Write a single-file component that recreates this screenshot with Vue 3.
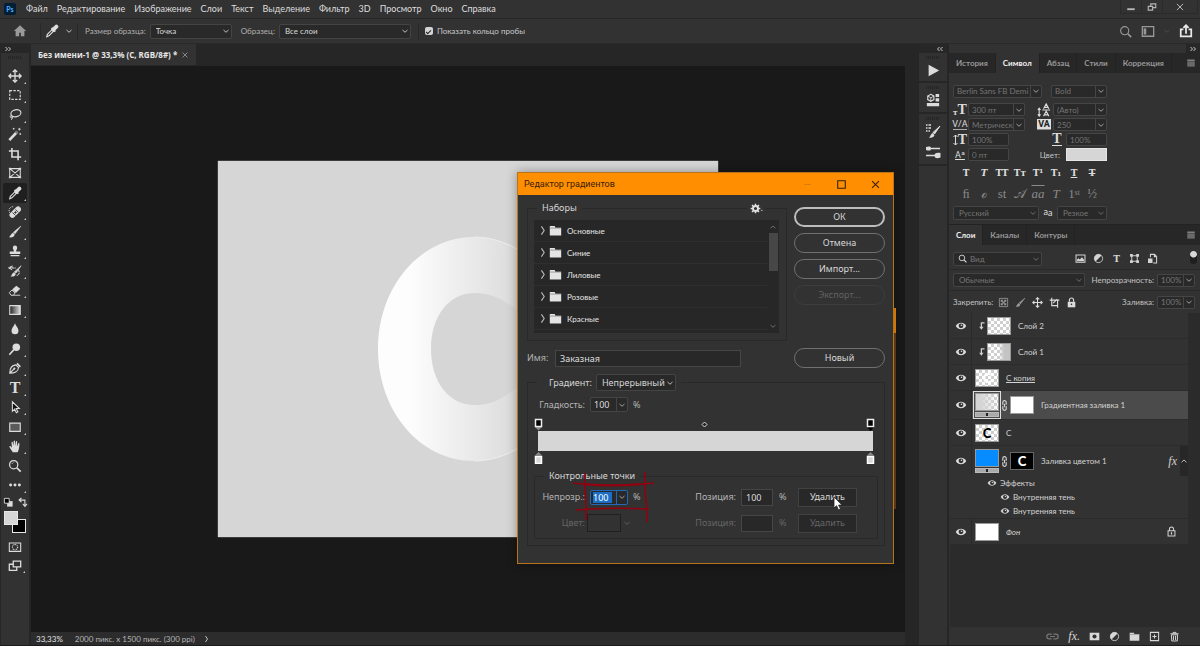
<script setup>
import { ref } from 'vue'

const menus = ['Файл', 'Редактирование', 'Изображение', 'Слои', 'Текст', 'Выделение', 'Фильтр', '3D', 'Просмотр', 'Окно', 'Справка']

const icons = {
  chevron: '<path d="M3 6l5 4.500L13 6" fill="none" stroke="currentColor" stroke-width="1.700"/>',
  chevronUp: '<path d="M3 10.500L8 6l5 4.500" fill="none" stroke="currentColor" stroke-width="1.700"/>',
  chevronRight: '<path d="M5 2l4 6-4 6" fill="none" stroke="currentColor" stroke-width="1.6"/>',
  expand: '<path d="M3 4l4 4-4 4M9 4l4 4-4 4" fill="none" stroke="currentColor" stroke-width="2"/>',
  collapse: '<path d="M7 4L3 8l4 4M13 4L9 8l4 4" fill="none" stroke="currentColor" stroke-width="2"/>',
  close: '<path d="M3 3l10 10M13 3L3 13" fill="none" stroke="currentColor" stroke-width="1.6"/>',
  minimize: '<path d="M2 10h12v3H2z" fill="currentColor"/>',
  restore: '<path d="M2 7h7v6H2zM6 7V3h8v6H9" fill="none" stroke="currentColor" stroke-width="1.8"/>',
  maximize: '<path d="M2.500 2.500h11v11h-11z" fill="none" stroke="currentColor" stroke-width="1.6"/>',
  dash: '<path d="M3 8h10" stroke="currentColor" stroke-width="1"/>',
  home: '<path d="M8 1.5L1 8h2v6h4V10h2v4h4V8h2z" fill="currentColor"/>',
  search: '<circle cx="7" cy="7" r="5" fill="none" stroke="currentColor" stroke-width="1.4"/><path d="M11 11l4 4" stroke="currentColor" stroke-width="2"/>',
  workspace: '<path d="M1.500 3h13v11h-13z" fill="none" stroke="currentColor" stroke-width="1.5"/><path d="M3 5h3v7H3z" fill="currentColor"/>',
  share: '<path d="M5 6H2v8h12V6h-3M8 11V2M5 4.500L8 1.500l3 3" fill="none" stroke="currentColor" stroke-width="2"/>',
  move: '<path d="M8 1v14M1 8h14M5.500 3.500L8 1l2.500 2.500M5.500 12.500L8 15l2.500-2.500M3.500 5.500L1 8l2.500 2.500M12.500 5.500L15 8l-2.500 2.500" fill="none" stroke="currentColor" stroke-width="1.5"/>',
  marquee: '<path d="M2 3h12v10H2z" fill="none" stroke="currentColor" stroke-width="1.3" stroke-dasharray="2.700 1.500"/>',
  lasso: '<ellipse cx="9" cy="6" rx="5.800" ry="4" transform="rotate(-12 9 6)" fill="none" stroke="currentColor" stroke-width="1.300"/><path d="M4 8.500c-2 0-2 3 0 2.500s0-2.500 0-2.500c2 2 1 4-0.500 5" fill="none" stroke="currentColor" stroke-width="1.100"/>',
  wand: '<path d="M1.500 15L10 6" stroke="currentColor" stroke-width="3"/><path d="M9 7l2-2" stroke="#777" stroke-width="3"/><path d="M13 1v3M11.500 2.500h3M6.500 1v2M5.500 2h2M14 7v2M13 8h2" stroke="currentColor" stroke-width="1"/>',
  crop: '<path d="M4.500 1v10.500H15M1 4.500h10.500V15" fill="none" stroke="currentColor" stroke-width="1.800"/>',
  frame: '<path d="M2 3h12v10H2zM2 3l12 10M14 3L2 13" fill="none" stroke="currentColor" stroke-width="1.200"/><path d="M1 2h2v2H1zM13 2h2v2h-2zM1 12h2v2H1zM13 12h2v2h-2z" fill="currentColor"/>',
  eyedropper: '<path d="M2 14.500l.7-2.700L8 6.500 9.700 8.200 4.500 13.500z" fill="none" stroke="currentColor" stroke-width="1.300"/><path d="M7.500 4.500l4.200 4.200" stroke="currentColor" stroke-width="2.200"/><path d="M9.500 6.500l3.500-3.500" stroke="currentColor" stroke-width="4.400" stroke-linecap="round"/>',
  heal: '<path d="M5 11.500L11.500 5" stroke="currentColor" stroke-width="6.500" stroke-linecap="round"/><path d="M5 8.500L8.500 12M8.500 5L12 8.500" stroke="#323232" stroke-width="1"/><path d="M7 8.500h3M8.500 7v3" stroke="#323232" stroke-width="1"/><path d="M2 9C0 5 2 1.500 7 2" fill="none" stroke="currentColor" stroke-width="1" stroke-dasharray="1.200 1"/>',
  brush: '<path d="M14.500 1.500L8 10 6.300 8.300z" fill="currentColor" stroke="currentColor" stroke-width=".8"/><path d="M5.700 8.800l2 2c-.5 3-3.200 3.700-6.700 3.200C3 13 3 9.800 5.700 8.800z" fill="currentColor"/>',
  stamp: '<path d="M5.500 4.500a2.500 2.800 0 1 1 5 0c0 1.500-1.200 2-1.200 4H14v3H2v-3h4.700c0-2-1.200-2.500-1.200-4zM3 12.600h10V14H3z" fill="currentColor"/>',
  history: '<path d="M15 2L9 10.500 7.300 9z" fill="currentColor" stroke="currentColor" stroke-width=".8"/><path d="M6.800 9.500l2 2c-.5 2.700-3 3.200-6 2.700 2-.8 1.500-3.700 4-4.700z" fill="currentColor"/><path d="M1 4.500h3.500V2.500L1 4.500l3.500 2zM5 4.500h4M12 7c2 3 0 6-2 6" fill="none" stroke="currentColor" stroke-width="1.200" stroke-dasharray="2.500 .6"/>',
  eraser: '<path d="M1.500 11l3-3L8 11.500 6 14H3.500z" fill="none" stroke="currentColor" stroke-width="1.100"/><path d="M4.800 7.500L9.500 3 14 6.500l-5 5z" fill="currentColor"/><path d="M6 14h8" stroke="currentColor"/>',
  gradient: '<defs><linearGradient id="toolGrad"><stop stop-color="#222"/><stop offset="1" stop-color="#ddd"/></linearGradient></defs><path d="M2 3h12v10H2z" fill="url(#toolGrad)" stroke="currentColor" stroke-width="1.200"/>',
  drop: '<path d="M8 1.500c1 3 4 5.500 4 8.500a4 4 0 0 1-8 0c0-3 3-5.500 4-8.500z" fill="currentColor"/>',
  dodge: '<circle cx="9.500" cy="6" r="4.300" fill="currentColor"/><path d="M6.500 9l-5 5.500" stroke="currentColor" stroke-width="1.800"/>',
  pen: '<path d="M2 14c0-5 2-9 7-9.500l3 3C12 12 7 14 2 14zM2 14l5-5" fill="none" stroke="currentColor" stroke-width="1.300"/><circle cx="7.300" cy="8.700" r="1.200" fill="currentColor"/><path d="M9.500 3.500l4 4 1.200-1.500L11 2z" fill="currentColor"/>',
  arrow: '<path d="M5 2v11l2.600-2.500 2 4 1.700-.9-2-3.800H13z" fill="#111" stroke="currentColor" stroke-width="1.200"/>',
  rect: '<path d="M2 3.500h12v9.500H2z" fill="#5a5a5a" stroke="currentColor" stroke-width="1.300"/>',
  hand: '<path d="M5.500 15C4 13 2 10 1.500 8.500c.8-.8 1.500-.3 3 1.500L4 4c.2-1 1.300-1 1.500 0L6.200 8 6.500 2.500c.2-1 1.400-1 1.500 0L8.300 8l.7-5c.3-1 1.400-.8 1.500.2L10.200 8.500 11.700 5c.5-.8 1.500-.4 1.400.5C12.800 8 13 12 11 15z" fill="currentColor"/>',
  zoom: '<circle cx="6.500" cy="6.500" r="4.700" fill="none" stroke="currentColor" stroke-width="1.400"/><path d="M10 10l4.500 4.500" stroke="currentColor" stroke-width="2"/><path d="M4.500 5.500l1.500-1.500" stroke="currentColor"/>',
  dots: '<circle cx="3" cy="8" r="1.700" fill="currentColor"/><circle cx="8" cy="8" r="1.700" fill="currentColor"/><circle cx="13" cy="8" r="1.700" fill="currentColor"/>',
  resetColors: '<path d="M6 6h8v8H6z" fill="currentColor"/><path d="M2 2h7v7H2z" fill="#000" stroke="currentColor" stroke-width="1.300"/>',
  swapColors: '<path d="M4 4.500h7.500V12M6.500 1.500l-3.500 3 3.500 3M8.500 10l3 3.500 3-3.500" fill="none" stroke="currentColor" stroke-width="1.600"/>',
  mask: '<path d="M1.500 3.500h13v9.500h-13z" fill="none" stroke="currentColor" stroke-width="1.200"/><circle cx="8" cy="8.200" r="3" fill="none" stroke="currentColor" stroke-width="1.200" stroke-dasharray="1.200 .8"/>',
  screen: '<path d="M6 2.500h8.500V9H6zM6 6H1.500v7h8.500V9" fill="none" stroke="currentColor" stroke-width="1.500"/>',
  play: '<path d="M2 1l13 7-13 7z" fill="currentColor"/>',
  props: '<path d="M5.500 1.500l3.500 2v4l-3.500 2-3.500-2v-4z" fill="none" stroke="currentColor" stroke-width="1.300"/><path d="M2 3.500l3.500 2 3.500-2M5.500 5.500v4" fill="none" stroke="currentColor" stroke-width="1"/><path d="M11 1h4v3.700h-4zM11 6h4v3.700h-4zM1 11.500h14V15H1z" fill="currentColor"/>',
  brushes: '<path d="M1 2h1.500M3.500 2H6M1 5h1.500M3.500 5H6M1 8h1.500M3.500 8H5" stroke="currentColor" stroke-width="1.300"/><path d="M15 3L9.500 11 8 9.500z" fill="currentColor" stroke="currentColor"/><path d="M7.500 10l2 2c-.6 2.500-3 3-5.500 2.500 1.700-.8 1.500-3.700 3.500-4.500z" fill="currentColor"/>',
  brushSettings: '<path d="M4 4.500h11M1 11.500h11" stroke="currentColor" stroke-width="1.500"/><path d="M1 3c3-1 5-1 5 1.500S4 7 1 6zM15.500 9c-4-.6-6 0-6 2.500s2 3.500 6 2z" fill="currentColor"/>',
  menu: '<path d="M2 3.500h12M2 6.500h12M2 9.500h12M2 12.500h12" stroke="currentColor" stroke-width="2.200"/>',
  image: '<path d="M1.500 3h13v10.500h-13z" fill="none" stroke="currentColor" stroke-width="1.500"/><path d="M3 12V9.500l2-2 2 2L10 6l3 3.500V12z" fill="currentColor"/>',
  adjust: '<circle cx="8" cy="8" r="6" fill="none" stroke="currentColor" stroke-width="1.200"/><path d="M12.300 3.700A6 6 0 0 0 3.700 12.300z" fill="currentColor"/>',
  shape: '<path d="M4 4h8v8H4z" fill="none" stroke="currentColor" stroke-width="1.400"/><path d="M1.500 1.500h4v4h-4zM10.500 1.500h4v4h-4zM1.500 10.500h4v4h-4zM10.500 10.500h4v4h-4z" fill="currentColor"/>',
  smart: '<path d="M5 6V2h6l3 3v9.500H9" fill="none" stroke="currentColor" stroke-width="1.500"/><path d="M1.500 8h6.500v6.500H1.500zM10 1v5h4z" fill="currentColor"/>',
  checker: '<path d="M2 2h12v12H2z" fill="none" stroke="currentColor" stroke-width="1.200"/><path d="M4 4h3v3H4zM9 4h3v3H9zM6.500 6.500h3v3h-3zM4 9h3v3H4zM9 9h3v3H9z" fill="currentColor"/>',
  artboard: '<path d="M4 1v11.500h8.500V4.500H1M9 4.500h6M12.500 12.500v3M6 9l6-6" fill="none" stroke="currentColor" stroke-width="1.600"/>',
  lock: '<path d="M2.500 7h11v8h-11z" fill="currentColor"/><path d="M5 7V4.500a3 3 0 0 1 6 0V7" fill="none" stroke="currentColor" stroke-width="1.700"/><circle cx="8" cy="10.700" r="1.200" fill="#323232"/>',
  lockOutline: '<path d="M3 7h10v7.500H3zM5 7V4.500a3 3 0 0 1 6 0V7" fill="none" stroke="currentColor" stroke-width="1.500"/><path d="M8 9v3.500" stroke="currentColor" stroke-width="1.800"/>',
  eye: '<path d="M1 8c3.500-5.800 10.500-5.800 14 0-3.500 5.800-10.500 5.800-14 0z" fill="currentColor"/><circle cx="8" cy="7.800" r="3.200" fill="#323232"/><circle cx="8.700" cy="7" r="1.100" fill="currentColor"/>',
  clip: '<path d="M12 3H7v7" fill="none" stroke="currentColor" stroke-width="2"/><path d="M3.500 9h7L7 14z" fill="currentColor"/>',
  chain: '<path d="M5.500 7V3.500a2.500 2.500 0 0 1 5 0V7M5.500 9v3.500a2.500 2.500 0 0 0 5 0V9M8 5.500v5" fill="none" stroke="currentColor" stroke-width="1.700"/>',
  chainFlat: '<path d="M7 5H4a3 3 0 0 0 0 6h3M9 5h3a3 3 0 0 1 0 6H9M5 8h6" fill="none" stroke="currentColor" stroke-width="1.500"/>',
  folder: '<path d="M1 2.500h6l1 2h7V14H1z" fill="currentColor"/><path d="M1 5h14" stroke="#777" stroke-width=".8"/>',
  addMask: '<path d="M1 2.500h14v11H1z" fill="currentColor"/><circle cx="8" cy="8" r="3" fill="#323232"/>',
  add: '<path d="M2 2h12v12H2zM8 5v6M5 8h6" fill="none" stroke="currentColor" stroke-width="1.500"/>',
  trash: '<path d="M2 4h12M6 4V2h4v2M3.500 5.500h9L12 14.500H4zM6.500 7v6M9.500 7v6" fill="none" stroke="currentColor" stroke-width="1.400"/>',
  gear: '<circle cx="8" cy="8" r="3.700" fill="none" stroke="currentColor" stroke-width="2.800"/><path d="M8 1v3M8 12v3M1 8h3M12 8h3M3 3l2 2M11 11l2 2M13 3l-2 2M5 11l-2 2" stroke="currentColor" stroke-width="2.200"/>',
}

const tools = [
  ['move', 'Перемещение'], ['marquee', 'Прямоугольная область'], ['lasso', 'Лассо'], ['wand', 'Волшебная палочка'],
  ['crop', 'Рамка'], ['frame', 'Кадр'], ['eyedropper', 'Пипетка'], ['heal', 'Восстанавливающая кисть'], ['brush', 'Кисть'],
  ['stamp', 'Штамп'], ['history', 'Архивная кисть'], ['eraser', 'Ластик'], ['gradient', 'Градиент'], ['drop', 'Размытие'],
  ['dodge', 'Осветлитель'], ['pen', 'Перо'], ['text', 'Текст'], ['arrow', 'Выделение контура'], ['rect', 'Прямоугольник'],
  ['hand', 'Рука'], ['zoom', 'Масштаб'], ['dots', 'Изменить панель'],
]
const activeTool = ref('eyedropper')

const presets = ['Основные', 'Синие', 'Лиловые', 'Розовые', 'Красные']
const charTabs = ['История', 'Символ', 'Абзац', 'Стили', 'Коррекция']
const layerTabs = ['Слои', 'Каналы', 'Контуры']

const faces = [
  ['T', 'bold'], ['T', 'italic'], ['TT', 'caps'], ['Tт', 'caps'], ['T¹', 'caps'], ['T₁', 'caps'], ['T', 'under'], ['T', 'strike'],
]
const features = ['ﬁ', 'ℴ', 'st', '𝒜', 'aa', 'T', '1ˢᵗ', '½']

const gradientName = ref('Заказная')
const smoothness = ref('100')
const opacity = ref('100')
const position = ref('100')
const showRing = ref(true)
</script>

<template>
  <div class="app">
    <header class="menubar">
      <span class="logo">Ps</span>
      <nav><a v-for="m in menus" :key="m" href="#">{{ m }}</a></nav>
      <div class="win-controls">
        <button aria-label="Свернуть"><svg viewBox="0 0 16 16" v-html="icons.minimize" /></button>
        <button aria-label="Восстановить"><svg viewBox="0 0 16 16" v-html="icons.restore" /></button>
        <button class="wide" aria-label="Закрыть"><svg viewBox="0 0 16 16" v-html="icons.close" /></button>
      </div>
    </header>

    <div class="options">
      <button class="home" aria-label="Домой"><svg viewBox="0 0 16 16" v-html="icons.home" /></button>
      <button class="current-tool" aria-label="Пипетка">
        <svg class="i14" viewBox="0 0 16 16" v-html="icons.eyedropper" />
        <svg class="i8" viewBox="0 0 16 16" v-html="icons.chevron" />
      </button>
      <label for="sample-size">Размер образца:</label>
      <span class="select w82"><select id="sample-size"><option>Точка</option></select><svg viewBox="0 0 16 16" v-html="icons.chevron" /></span>
      <label for="sample" class="second">Образец:</label>
      <span class="select w132"><select id="sample"><option>Все слои</option></select><svg viewBox="0 0 16 16" v-html="icons.chevron" /></span>
      <label class="check"><input v-model="showRing" type="checkbox" /><span>Показать кольцо пробы</span></label>
      <div class="options-right">
        <button aria-label="Поиск"><svg class="i12" viewBox="0 0 16 16" v-html="icons.search" /></button>
        <button aria-label="Рабочая среда"><svg class="i14" viewBox="0 0 16 16" v-html="icons.workspace" /></button>
        <button class="dim" aria-label="Список сред"><svg class="i8" viewBox="0 0 16 16" v-html="icons.chevron" /></button>
        <button class="bright" aria-label="Поделиться"><svg class="i14" viewBox="0 0 16 16" v-html="icons.share" /></button>
      </div>
    </div>

    <div class="workspace">
      <aside class="toolbox">
        <div class="rail-head left"><svg viewBox="0 0 16 16" v-html="icons.expand" /></div>
        <div class="grip" />
        <div class="tools">
          <button v-for="t in tools" :key="t[0]" :class="{ active: activeTool === t[0], corner: t[0] !== 'frame' && t[0] !== 'zoom' }" :aria-label="t[1]" @click="activeTool = t[0]">
            <span v-if="t[0] === 'text'" class="type-tool">T</span>
            <svg v-else class="i14" viewBox="0 0 16 16" v-html="icons[t[0]]" />
          </button>
        </div>
        <div class="mini">
          <button aria-label="Цвета по умолчанию"><svg class="i10" viewBox="0 0 16 16" v-html="icons.resetColors" /></button>
          <button aria-label="Поменять цвета"><svg class="i10" viewBox="0 0 16 16" v-html="icons.swapColors" /></button>
        </div>
        <div class="swatches"><button class="bg" aria-label="Цвет фона" /><button class="fg" aria-label="Основной цвет" /></div>
        <button class="mode" aria-label="Быстрая маска"><svg class="i14" viewBox="0 0 16 16" v-html="icons.mask" /></button>
        <button class="mode corner" aria-label="Режим экрана"><svg class="i14" viewBox="0 0 16 16" v-html="icons.screen" /></button>
      </aside>

      <main class="document">
        <div class="doc-tabs">
          <div class="doc-tab"><span>Без имени-1 @ 33,3% (C, RGB/8#) *</span><button aria-label="Закрыть документ"><svg class="i8" viewBox="0 0 16 16" v-html="icons.close" /></button></div>
        </div>
        <div class="stage">
          <div class="artboard">
            <svg viewBox="0 0 500 376">
              <defs>
                <linearGradient id="ringFill" gradientUnits="userSpaceOnUse" x1="160" y1="0" x2="350" y2="0">
                  <stop offset="0.170" stop-color="#fdfdfd" /><stop offset="0.750" stop-color="#dadada" /><stop offset="1" stop-color="#d6d6d6" />
                </linearGradient>
              </defs>
              <path fill="url(#ringFill)" fill-rule="evenodd" d="M256 76C306 76 352 125 352 188S306 300 256 300C202 300 160 250 160 188S202 76 256 76ZM257 132C231 132 213 155 213 188S231 244 257 244C275 244 290 236 310 216V158C290 140 275 132 257 132Z" />
              <path fill="none" stroke="#eee" d="M256 76C276 76 296 84 312 97M256 300C276 300 296 292 312 279" />
            </svg>
          </div>
        </div>
        <footer class="status"><span>33,33%</span><span class="size">2000 пикс. x 1500 пикс. (300 ppi)</span><svg class="i8" viewBox="0 0 16 16" v-html="icons.chevronRight" /></footer>
      </main>

      <aside class="rail">
        <div class="rail-head right"><svg viewBox="0 0 16 16" v-html="icons.collapse" /></div>
        <div class="rail-group one"><div class="grip" /><button aria-label="Операции"><svg class="i12" viewBox="0 0 16 16" v-html="icons.play" /></button></div>
        <div class="rail-group two"><div class="grip" /><button aria-label="Свойства"><svg class="i14" viewBox="0 0 16 16" v-html="icons.props" /></button></div>
        <div class="rail-group three">
          <div class="grip" />
          <button aria-label="Настройки кисти"><svg class="i16" viewBox="0 0 16 16" v-html="icons.brushes" /></button>
          <button aria-label="Кисти"><svg class="i16" viewBox="0 0 16 16" v-html="icons.brushSettings" /></button>
        </div>
      </aside>

      <aside class="panels">
        <div class="rail-head right"><svg viewBox="0 0 16 16" v-html="icons.expand" /></div>
        <div class="tabs"><button v-for="t in charTabs" :key="t" :class="{ active: t === 'Символ' }">{{ t }}</button><svg class="tabs-menu" viewBox="0 0 16 16" v-html="icons.menu" /></div>

        <section class="character">
          <div class="crow first">
            <span class="combo w89"><input value="Berlin Sans FB Demi" aria-label="Гарнитура" /><button aria-label="Список"><svg viewBox="0 0 16 16" v-html="icons.chevron" /></button></span>
            <span class="combo w56"><input value="Bold" aria-label="Начертание" /><button aria-label="Список"><svg viewBox="0 0 16 16" v-html="icons.chevron" /></button></span>
          </div>
          <div class="crow">
            <span class="cico"><small>т</small>T</span>
            <span class="combo w57"><input value="300 пт" aria-label="Кегль" /><button aria-label="Список"><svg viewBox="0 0 16 16" v-html="icons.chevron" /></button></span>
            <span class="cico push"><svg class="i14" viewBox="0 0 16 16"><path d="M2.500 6v9M1 8l1.500-2L4 8M1 13l1.500 2L4 13M6 8h9M7.500 6.500L10.500 1l3 5.500M8 5h5M7.500 15l3-5.500 3 5.500M8 13.500h5" fill="none" stroke="currentColor" stroke-width="1.300" /></svg></span>
            <span class="combo w54"><input value="(Авто)" aria-label="Интерлиньяж" /><button aria-label="Список"><svg viewBox="0 0 16 16" v-html="icons.chevron" /></button></span>
          </div>
          <div class="crow">
            <span class="cico kern">V/A</span>
            <span class="combo w57"><input value="Метрически" aria-label="Кернинг" /><button aria-label="Список"><svg viewBox="0 0 16 16" v-html="icons.chevron" /></button></span>
            <span class="cico push"><b class="va">VA</b></span>
            <span class="combo w54"><input value="250" aria-label="Трекинг" /><button aria-label="Список"><svg viewBox="0 0 16 16" v-html="icons.chevron" /></button></span>
          </div>
          <div class="crow">
            <span class="cico"><svg class="i5" viewBox="0 0 5 14"><path d="M2.500 2v10M.5 4l2-2 2 2M.5 10l2 2 2-2" fill="none" stroke="currentColor" /></svg>T</span>
            <span class="combo w41"><input value="100%" aria-label="Масштаб по вертикали" /></span>
            <span class="cico push"><b class="wide-t">T</b></span>
            <span class="combo w41"><input value="100%" aria-label="Масштаб по горизонтали" /></span>
          </div>
          <div class="crow">
            <span class="cico kern shift">Aª</span>
            <span class="combo w41"><input value="0 пт" aria-label="Смещение базовой линии" /></span>
            <label for="text-color" class="push">Цвет:</label>
            <button id="text-color" class="color" aria-label="Цвет текста" />
          </div>
          <div class="faces"><button v-for="(f, i) in faces" :key="i" :class="f[1]">{{ f[0] }}</button></div>
          <div class="faces ot"><button v-for="(f, i) in features" :key="i" :class="{ over: i === 4, it: i > 3 && i < 6 }">{{ f }}</button></div>
          <div class="crow last">
            <span class="select w86"><select aria-label="Язык"><option>Русский</option></select><svg viewBox="0 0 16 16" v-html="icons.chevron" /></span>
            <span class="aa">a<sub>a</sub></span>
            <span class="select w50"><select aria-label="Сглаживание"><option>Резкое</option></select><svg viewBox="0 0 16 16" v-html="icons.chevron" /></span>
          </div>
        </section>

        <div class="tabs layer-tabs"><button v-for="t in layerTabs" :key="t" :class="{ active: t === 'Слои' }">{{ t }}</button><svg class="tabs-menu" viewBox="0 0 16 16" v-html="icons.menu" /></div>

        <section class="layers">
          <div class="lrow filter">
            <span class="select w89 with-icon"><select aria-label="Фильтр слоев"><option>Вид</option></select><svg class="lead" viewBox="0 0 16 16" v-html="icons.search" /><svg viewBox="0 0 16 16" v-html="icons.chevron" /></span>
            <div class="filter-icons">
              <svg class="i10" viewBox="0 0 16 16" v-html="icons.image" /><svg class="i10" viewBox="0 0 16 16" v-html="icons.adjust" /><b>T</b><svg class="i10" viewBox="0 0 16 16" v-html="icons.shape" /><svg class="i10" viewBox="0 0 16 16" v-html="icons.smart" />
            </div>
            <span class="toggle" />
          </div>
          <div class="lrow blend">
            <span class="select blend-mode"><select aria-label="Режим наложения"><option>Обычные</option></select><svg viewBox="0 0 16 16" v-html="icons.chevron" /></span>
            <label for="l-op">Непрозрачность:</label>
            <span class="combo w38"><input id="l-op" value="100%" /><button aria-label="Список"><svg viewBox="0 0 16 16" v-html="icons.chevron" /></button></span>
          </div>
          <div class="lrow locks">
            <span class="lock-label">Закрепить:</span>
            <div class="lock-icons">
              <svg class="i10 dim" viewBox="0 0 16 16" v-html="icons.checker" /><svg class="i10 dim" viewBox="0 0 16 16" v-html="icons.brush" /><svg class="i10" viewBox="0 0 16 16" v-html="icons.move" /><svg class="i10" viewBox="0 0 16 16" v-html="icons.artboard" /><svg class="i10" viewBox="0 0 16 16" v-html="icons.lock" />
            </div>
            <label for="l-fill">Заливка:</label>
            <span class="combo w38"><input id="l-fill" value="100%" /><button aria-label="Список"><svg viewBox="0 0 16 16" v-html="icons.chevron" /></button></span>
          </div>

          <div class="layer-area">
            <div class="layer-list">
              <div class="layer"><button class="eye" aria-label="Видимость"><svg viewBox="0 0 16 16" v-html="icons.eye" /></button><svg class="clip" viewBox="0 0 16 16" v-html="icons.clip" /><span class="thumb checks" /><span class="lname">Слой 2</span></div>
              <div class="layer"><button class="eye" aria-label="Видимость"><svg viewBox="0 0 16 16" v-html="icons.eye" /></button><svg class="clip" viewBox="0 0 16 16" v-html="icons.clip" /><span class="thumb checks half" /><span class="lname">Слой 1</span></div>
              <div class="layer"><button class="eye" aria-label="Видимость"><svg viewBox="0 0 16 16" v-html="icons.eye" /></button><span class="thumb checks white-c">C</span><span class="lname underlined">С копия</span></div>
              <div class="layer tall selected"><button class="eye" aria-label="Видимость"><svg viewBox="0 0 16 16" v-html="icons.eye" /></button><span class="fill-thumb framed"><span class="pane checks fade" /><span class="slider" /></span><svg class="chain" viewBox="0 0 16 16" v-html="icons.chain" /><span class="thumb white" /><span class="lname">Градиентная заливка 1</span></div>
              <div class="layer"><button class="eye" aria-label="Видимость"><svg viewBox="0 0 16 16" v-html="icons.eye" /></button><span class="thumb checks black-c">C</span><span class="lname">C</span></div>
              <div class="layer color-fill"><button class="eye" aria-label="Видимость"><svg viewBox="0 0 16 16" v-html="icons.eye" /></button><span class="fill-thumb"><span class="pane blue" /><span class="slider" /></span><svg class="chain" viewBox="0 0 16 16" v-html="icons.chain" /><span class="thumb mask">C</span><span class="lname">Заливка цветом 1</span><i class="fx">fx</i><button class="fold" aria-label="Свернуть эффекты"><svg class="i8" viewBox="0 0 16 16" v-html="icons.chevronUp" /></button></div>
              <div class="effects">
                <div class="effect"><svg viewBox="0 0 16 16" v-html="icons.eye" /><span>Эффекты</span></div>
                <div class="effect nested"><svg viewBox="0 0 16 16" v-html="icons.eye" /><span>Внутренняя тень</span></div>
                <div class="effect nested"><svg viewBox="0 0 16 16" v-html="icons.eye" /><span>Внутренняя тень</span></div>
              </div>
              <div class="layer"><button class="eye" aria-label="Видимость"><svg viewBox="0 0 16 16" v-html="icons.eye" /></button><span class="thumb white" /><i class="lname">Фон</i><svg class="bg-lock" viewBox="0 0 16 16" v-html="icons.lockOutline" /></div>
            </div>
          </div>
          <footer class="layer-actions">
            <button class="dim" aria-label="Связать слои"><svg class="i12" viewBox="0 0 16 16" v-html="icons.chainFlat" /></button>
            <button aria-label="Стиль слоя"><i>fx.</i></button>
            <button aria-label="Добавить маску"><svg class="i10" viewBox="0 0 16 16" v-html="icons.addMask" /></button>
            <button aria-label="Корректирующий слой"><svg class="i10" viewBox="0 0 16 16" v-html="icons.adjust" /></button>
            <button aria-label="Новая группа"><svg class="i10" viewBox="0 0 16 16" v-html="icons.folder" /></button>
            <button aria-label="Новый слой"><svg class="i10" viewBox="0 0 16 16" v-html="icons.add" /></button>
            <button aria-label="Удалить слой"><svg class="i10" viewBox="0 0 16 16" v-html="icons.trash" /></button>
          </footer>
        </section>
      </aside>
    </div>

    <div class="behind-edge" />
    <section class="dialog" role="dialog" aria-labelledby="dlg-title">
      <header class="dlg-title">
        <h1 id="dlg-title">Редактор градиентов</h1>
        <button class="faint" aria-label="Свернуть"><svg class="i10" viewBox="0 0 16 16" v-html="icons.dash" /></button>
        <button aria-label="Развернуть"><svg class="i10" viewBox="0 0 16 16" v-html="icons.maximize" /></button>
        <button aria-label="Закрыть"><svg class="i10" viewBox="0 0 16 16" v-html="icons.close" /></button>
      </header>
      <div class="dlg-body">
        <div class="dlg-top">
          <fieldset class="presets">
            <legend>Наборы</legend>
            <button class="gear" aria-label="Параметры наборов"><svg class="i10" viewBox="0 0 16 16" v-html="icons.gear" />.</button>
            <div class="preset-box">
              <ul>
                <li v-for="p in presets" :key="p"><svg class="i10 arrow" viewBox="0 0 16 16" v-html="icons.chevronRight" /><svg class="i12" viewBox="0 0 16 16" v-html="icons.folder" /><span>{{ p }}</span></li>
              </ul>
              <div class="scroll"><svg class="i8" viewBox="0 0 16 16" v-html="icons.chevronUp" /><span /><svg class="i8" viewBox="0 0 16 16" v-html="icons.chevron" /></div>
            </div>
          </fieldset>
          <div class="dlg-buttons">
            <button class="pill primary">ОК</button>
            <button class="pill">Отмена</button>
            <button class="pill">Импорт...</button>
            <button class="pill" disabled>Экспорт...</button>
          </div>
        </div>
        <div class="name-row">
          <label for="g-name">Имя:</label>
          <input id="g-name" v-model="gradientName" class="box" />
          <button class="pill">Новый</button>
        </div>
        <fieldset class="grad">
          <legend>
            <label for="g-type">Градиент:</label>
            <span class="select w80"><select id="g-type"><option>Непрерывный</option></select><svg viewBox="0 0 16 16" v-html="icons.chevron" /></span>
          </legend>
          <div class="smooth">
            <label for="g-smooth">Гладкость:</label>
            <span class="combo w38"><input id="g-smooth" v-model="smoothness" /><button aria-label="Список"><svg viewBox="0 0 16 16" v-html="icons.chevron" /></button></span>
            <span>%</span>
          </div>
          <div class="ramp">
            <div class="stops">
              <svg viewBox="0 0 9 13"><path d="M1 9h7l-3.500 3.500z" fill="#888" /><path d="M1.500 1.500h6v7h-6z" fill="#000" stroke="#eee" stroke-width="1.500" /></svg>
              <svg class="mid" viewBox="0 0 7 7"><path d="M3.500 1L6 3.500 3.500 6 1 3.500z" fill="#222" stroke="#ddd" /></svg>
              <svg viewBox="0 0 9 13"><path d="M1 9h7l-3.500 4z" fill="#000" /><path d="M1.500 1.500h6v7h-6z" fill="#000" stroke="#eee" stroke-width="1.500" /></svg>
            </div>
            <div class="bar" />
            <div class="stops">
              <svg viewBox="0 0 9 13"><path d="M1 4.500h7L4.500 1z" fill="#888" /><path d="M1.500 5.500h6v7h-6z" fill="#d8d8d8" stroke="#fff" stroke-width="1.500" /></svg>
              <svg viewBox="0 0 9 13"><path d="M1 4.500h7L4.500 1z" fill="#888" /><path d="M1.500 5.500h6v7h-6z" fill="#d8d8d8" stroke="#fff" stroke-width="1.500" /></svg>
            </div>
          </div>
          <fieldset class="points">
            <legend>Контрольные точки</legend>
            <div class="point-row">
              <label for="p-op">Непрозр.:</label>
              <span class="combo w38 focus"><span class="sel"><input id="p-op" v-model="opacity" /></span><button aria-label="Список"><svg viewBox="0 0 16 16" v-html="icons.chevron" /></button></span>
              <span>%</span>
              <div class="right">
                <label for="p-pos">Позиция:</label><input id="p-pos" v-model="position" class="box" /><span class="pct">%</span><button class="flat">Удалить</button>
              </div>
            </div>
            <div class="point-row off">
              <label for="p-color">Цвет:</label>
              <button id="p-color" class="chip" disabled aria-label="Цвет точки" /><svg class="i8" viewBox="0 0 16 16" v-html="icons.chevron" />
              <div class="right">
                <label for="p-pos2">Позиция:</label><input id="p-pos2" class="box" disabled /><span class="pct">%</span><button class="flat" disabled>Удалить</button>
              </div>
            </div>
          </fieldset>
        </fieldset>
      </div>
      <svg class="marks" viewBox="0 0 84 54">
        <path d="M12 3C11 18 14 34 13 50M72 2C71 18 74 34 74 52M0 13C22 16 55 16 81 13M3 40C25 38 55 38 76 39" fill="none" stroke="#93000f" stroke-width="1.500" />
        <path d="M10 14Q38 17 68 14" fill="none" stroke="#93000f" stroke-width="2.200" />
      </svg>
      <svg class="cursor" viewBox="0 0 10 15"><path d="M1 1v11l2.600-2.300L5.500 14l2-.9-1.900-4H9z" fill="#fff" stroke="#222" stroke-width=".8" /></svg>
    </section>
  </div>
</template>

<style>
html, body { background: #323232; }
</style>

<style scoped>
.app, .app * { box-sizing: border-box; }
.app {
  position: relative; display: flex; flex-direction: column; min-height: 100vh;
  background: #323232; color: #cfcfcf; overflow: hidden;
  font: 8px/12px Lato, Roboto, sans-serif;
}
button { border: 0; background: none; color: inherit; font: inherit; padding: 0; display: flex; align-items: center; justify-content: center; }
input, select { font: inherit; color: inherit; min-width: 0; margin: 0; outline: 0; }
svg { display: block; flex: none; }
.i5 { width: 5px; height: 14px; }
.i8 { width: 8px; height: 8px; }
.i10 { width: 11px; height: 11px; }
.i12 { width: 13px; height: 13px; }
.i14 { width: 14px; height: 14px; }
.i16 { width: 16px; height: 16px; }
.dim { color: #777; }

.menubar { display: flex; align-items: center; height: 19px; border-bottom: 1px solid #262626; }
.logo { width: 12px; height: 12px; margin: 0 10px 0 4px; border-radius: 2px; background: #001e36; color: #4fb0ff; font-size: 7px; font-weight: 700; line-height: 12px; text-align: center; }
.menubar nav { display: flex; gap: 9px; font-size: 9px; }
.menubar a { color: #dedede; text-decoration: none; }
.win-controls { display: flex; align-self: flex-start; height: 14px; margin: 0 2px 0 auto; border: 1px solid #2a2a2a; border-top: 0; color: #b5b5b5; }
.win-controls button { width: 21px; border-right: 1px solid #2a2a2a; }
.win-controls .wide { width: 34px; border: 0; }
.win-controls svg { width: 10px; height: 10px; }

.options { display: flex; align-items: center; height: 25px; border-bottom: 1px solid #292929; color: #b0b0b0; }
.home { width: 41px; height: 17px; border-right: 1px solid #282828; color: #9a9a9a; }
.home svg { width: 14px; height: 14px; }
.current-tool { gap: 6px; width: 37px; height: 17px; margin-right: 7px; border-right: 1px solid #282828; color: #ddd; }
.options .select { height: 15px; margin-left: 4px; color: #d8d8d8; }
.second { margin-left: 9px; }
.check { display: flex; align-items: center; gap: 4px; height: 17px; margin-left: 7px; padding-left: 6px; border-left: 1px solid #282828; color: #c8c8c8; }
.check input { appearance: none; width: 8px; height: 8px; border-radius: 2px; background: #d4d4d4; display: grid; place-items: center; }
.check input:checked::after { content: ""; width: 4px; height: 2px; border: solid #222; border-width: 0 0 1px 1px; transform: rotate(-45deg); }
.options-right { display: flex; align-items: center; gap: 9px; margin: 0 7px 0 auto; color: #989898; }
.options-right .dim { margin: 0 -1px; color: #4d4d4d; }
.options-right .bright { color: #e8e8e8; }

.select { display: inline-grid; align-items: center; height: 14px; }
.select > * { grid-area: 1 / 1; }
.select > svg { justify-self: end; width: 8px; height: 8px; margin-right: 2px; pointer-events: none; }
.select > .lead { justify-self: start; width: 9px; height: 9px; margin-left: 5px; color: #eee; }
.select select { appearance: none; width: 100%; height: 100%; padding: 0 5px; background: #292929; border: 1px solid #444; border-radius: 2px; }
.select.with-icon select { padding-left: 16px; }
.combo { display: flex; height: 13px; border: 1px solid #454545; border-radius: 2px; background: #292929; }
.combo input { flex: 1; width: 0; border: 0; padding: 0 0 0 3px; background: none; }
.combo button { width: 11px; border-left: 1px solid #454545; color: #b5b5b5; }
.combo svg { width: 8px; height: 8px; }
.w38 { width: 38px; } .w41 { width: 41px; } .w50 { width: 50px; } .w54 { width: 54px; } .w56 { width: 56px; } .w57 { width: 57px; }
.w80 { width: 80px; } .w82 { width: 82px; } .w86 { width: 86px; } .w89 { width: 89px; } .w132 { width: 132px; }

.workspace { display: flex; flex: 1; background: #262626; border-bottom: 1px solid #1b1b1b; }
.rail-head { display: flex; align-items: center; height: 9px; padding: 0 3px; background: #272727; color: #c8c8c8; }
.rail-head svg { width: 8px; height: 8px; }
.rail-head.right { justify-content: flex-end; }
.grip { width: 14px; height: 3px; margin: 3px auto; background: repeating-linear-gradient(90deg, #262626 0 1px, #303030 1px 2px); }

.toolbox { display: flex; flex-direction: column; align-items: center; width: 29px; background: #323232; border-left: 1px solid #272727; color: #dcdcdc; }
.toolbox .rail-head { align-self: stretch; }
.tools { display: grid; grid-auto-rows: 1fr; width: 24px; height: 429px; margin-top: 4px; }
.tools button { position: relative; border-radius: 2px; }
.tools .active { background: #1f1f1f; }
.corner { position: relative; }
.corner::after { content: ""; position: absolute; right: 1px; bottom: 2px; border: 1px solid; border-color: transparent #ccc #ccc transparent; }
.type-tool { font: 700 16px/16px "Liberation Serif", serif; }
.mini { display: flex; gap: 3px; height: 14px; }
.swatches { position: relative; width: 22px; height: 22px; margin: 2px 0 4px; }
.swatches button { position: absolute; width: 14px; height: 14px; border: 1px solid #e6e6e6; }
.swatches .fg { left: 0; top: 0; background: #d6d6d6; }
.swatches .bg { right: 0; bottom: 0; background: #000; }
.mode { width: 22px; height: 19px; }

.document { display: flex; flex: 1; flex-direction: column; min-width: 0; margin-left: 2px; }
.doc-tabs { display: flex; height: 22px; }
.doc-tab { display: flex; align-items: center; gap: 4px; height: 21px; padding: 0 7px; background: #323232; color: #e6e6e6; font: 700 8px/12px "Open Sans", sans-serif; }
.doc-tab button { color: #999; }
.stage { position: relative; flex: 1; margin-right: 14px; background: #191919; }
.artboard { position: absolute; left: 187px; top: 95px; width: 500px; height: 376px; background: #d6d6d6; box-shadow: 0 0 1px #eee; }
.status { display: flex; align-items: center; gap: 12px; height: 13px; padding-left: 5px; background: #2c2c2c; margin-right: 14px; color: #e2e2e2; font-size: 8px; }
.status .size { color: #b5b5b5; }
.status svg { margin-left: -4px; }

.rail { width: 28px; background: #323232; color: #dcdcdc; margin-right: 2px; }
.rail button { width: 28px; height: 16px; margin-bottom: 5px; }
.rail-group { display: flow-root; border-bottom: 2px solid #262626; }
.rail-group.one { height: 30px; }
.rail-group.two { height: 31px; }
.rail-group.three { height: 52px; }

.panels { display: flex; flex-direction: column; width: 251px; background: #323232; }
.tabs { display: flex; height: 20px; background: #272727; color: #979797; font-weight: 700; }
.tabs button { padding: 0 7px; border-right: 1px solid #222; }
.tabs .active { background: #323232; color: #f0f0f0; }
.tabs-menu { width: 10px; height: 10px; margin: 5px 4px 0 auto; color: #808080; }
.layer-tabs { height: 21px; border-top: 1px solid #222; }

.character { height: 151px; padding: 11px 0 0 4px; color: #747474; }
.crow { display: flex; align-items: center; width: 154px; height: 15px; }
.crow.first { justify-content: space-between; height: 14px; margin-bottom: 4px; }
.crow .push { margin-left: auto; margin-right: 2px; }
.cico { display: flex; align-items: center; justify-content: center; width: 14px; margin-right: 1px; color: #dcdcdc; font: 700 14px/14px "Liberation Serif", serif; }
.cico small { font-size: 9px; align-self: flex-end; line-height: 10px; }
.cico .va { padding: 0 1px; background: #ddd; color: #222; font: 700 9px/10px Roboto, sans-serif; border-bottom: 1px solid #888; }
.cico.kern { font: 9px/10px Roboto, sans-serif; border-bottom: 1px solid #aaa; }
.cico.shift { border-bottom: 0; text-decoration: underline; }
.wide-t { border-bottom: 1px solid #ddd; line-height: 12px; }
.crow label { color: #c2c2c2; }
.crow label.push { margin-right: 6px; }
.color { width: 41px; height: 13px; background: #d6d6d6; border: 1px solid #e6e6e6; }
.faces { display: grid; grid-template-columns: repeat(8, 18px); height: 18px; margin: 2px 0 0 4px; color: #dcdcdc; }
.faces button { font: 700 9px/14px "DejaVu Serif", serif; }
.faces .italic { font-style: italic; }
.faces .under { text-decoration: underline; }
.faces .strike { text-decoration: line-through; }
.faces.ot { color: #8a8a8a; margin-top: 3px; }
.faces.ot button { font: 400 13px/14px "Liberation Serif", serif; }
.faces.ot .it { font-style: italic; }
.faces.ot .over { text-decoration: overline; }
.crow.last { justify-content: space-between; margin-top: 2px; }
.aa { color: #ddd; font-size: 9px; line-height: 10px; }
.aa sub { font-size: 9px; vertical-align: -1px; }

.layers { display: flex; flex: 1; flex-direction: column; padding-left: 1px; }
.lrow { display: flex; align-items: center; padding: 0 5px 0 3px; }
.filter { height: 25px; border-bottom: 1px solid #292929; padding-top: 3px; color: #777; }
.filter-icons { display: flex; align-items: center; gap: 7px; margin: 0 0 0 33px; color: #d4d4d4; }
.filter-icons b { width: 11px; text-align: center; font: 700 9px/12px "DejaVu Serif", serif; }
.toggle { width: 7px; height: 13px; margin: -3px -2px 0 auto; border-radius: 4px; background: radial-gradient(circle at 50% 3px, #d8d8d8 3px, #1f1f1f 4px); }
.blend { height: 21px; border-bottom: 1px solid #292929; color: #777; gap: 3px; }
.blend-mode { flex: 1; }
.blend label, .locks label { color: #c2c2c2; }
.blend label { margin-left: 3px; }
.locks { height: 22px; gap: 3px; color: #777; }
.lock-label { width: 41px; white-space: nowrap; color: #c2c2c2; }
.lock-icons { display: flex; gap: 6px; margin: 0 auto 0 1px; color: #dcdcdc; }
.lock-icons .dim { color: #999; }
.layer-area { flex: 1; background: #2b2b2b; }
.layer-list { margin-right: 12px; }
.layer { display: flex; align-items: center; height: 26px; background: #323232; border-bottom: 1px solid #2c2c2c; color: #d2d2d2; }
.eye { width: 22px; height: 100%; margin-right: 3px; border-right: 1px solid #2a2a2a; background: #323232; color: #dedede; }
.eye svg { width: 12px; height: 12px; }
.clip { width: 10px; height: 10px; margin: 0 0 0 2px; }
.thumb { width: 24px; height: 18px; border: 1px solid #9a9a9a; text-align: center; }
.checks { background: #fff repeating-conic-gradient(#cfcfcf 0 25%, #fff 0 50%) 0 0 / 6px 6px; }
.checks.half { background: linear-gradient(90deg, transparent 50%, #c4c4c4 75%), repeating-conic-gradient(#cfcfcf 0 25%, #fff 0 50%) 0 0 / 6px 6px; }
.white { background: #fff; }
.thumb.mask { background: #000; color: #fff; border-color: #666; }
.black-c, .white-c, .thumb.mask { font: 900 13px/16px Lato, sans-serif; }
.black-c { color: #000; }
.white-c { color: #fff; }
.lname { margin-left: 7px; }
.underlined { text-decoration: underline; }
.tall { height: 29px; }
.selected { background: #4b4b4b; }
.fill-thumb { display: flex; flex-direction: column; width: 24px; height: 24px; }
.framed { outline: 1px solid #ddd; outline-offset: 1px; }
.pane { flex: 1; border: 1px solid #999; }
.pane.blue { background: #068cff; }
.pane.fade { background: linear-gradient(90deg, #d4d4d4 20%, transparent), repeating-conic-gradient(#cfcfcf 0 25%, #fff 0 50%) 0 0 / 6px 6px; }
.slider { height: 5px; margin-top: 1px; border: 1px solid #bbb; background: linear-gradient(90deg, #aaa 10px, #222 10px 12px, #aaa 12px); }
.chain { width: 11px; height: 13px; }
.color-fill { height: 30px; border: 0; }
.fx { margin-left: auto; margin-right: 3px; font: italic 12px/12px "Liberation Serif", serif; }
.fold { width: 8px; height: 100%; background: #272727; }
.effects { padding: 0 0 0 37px; height: 43px; background: #323232; border-bottom: 1px solid #2a2a2a; color: #d2d2d2; }
.effect { display: flex; align-items: center; gap: 3px; height: 14px; }
.effect svg { width: 10px; height: 10px; }
.nested { padding-left: 13px; }
.bg-lock { width: 11px; height: 11px; margin: 0 11px 0 auto; }
.layer-actions { display: flex; align-items: center; justify-content: flex-end; gap: 9px; height: 18px; padding-right: 20px; color: #d8d8d8; }
.layer-actions i { font: italic 12px/12px "Liberation Serif", serif; }

.behind-edge { position: absolute; left: 894px; top: 308px; width: 2px; height: 201px; background: linear-gradient(#f28a08 25px, #6b4016 25px); }
.dialog { position: absolute; left: 517px; top: 172px; width: 377px; border: 1px solid #b8741a; background: #323232; color: #d6d6d6; box-shadow: 0 0 10px rgb(0 0 0 / 35%); font: 9px/14px "Noto Sans", sans-serif; }
.dlg-title { display: flex; align-items: center; height: 22px; padding: 0 6px; background: #ff8f00; color: #3a2000; }
.dlg-title h1 { flex: 1; margin: 0; font: 9px/14px Roboto, sans-serif; }
.dlg-title button { width: 24px; margin-left: 10px; }
.dlg-title .faint { color: #c97716; }
.dlg-body { padding: 6px 8px 17px 9px; }
fieldset { min-width: 0; margin: 0; border: 1px solid #292929; }
legend { padding: 0 5px; }
.dlg-top { display: flex; gap: 7px; }
.presets { position: relative; flex: 1; padding: 0 7px 7px 6px; }
.presets legend { margin-left: 3px; }
.gear { position: absolute; right: 20px; top: -13px; padding: 0 3px; background: #323232; color: #e2e2e2; line-height: 12px; }
.preset-box { display: flex; margin-top: 5px; background: #272727; }
.preset-box ul { flex: 1; margin: 0; padding: 0 0 3px; list-style: none; }
.preset-box li { display: flex; align-items: center; height: 22px; padding-left: 4px; border-bottom: 1px solid #2f2f2f; font: 8px/12px Lato, Roboto, sans-serif; color: #e4e4e4; }
.preset-box li span { margin-left: 5px; }
.arrow { color: #bbb; }
.scroll { display: flex; flex-direction: column; align-items: center; justify-content: space-between; width: 12px; padding: 3px 0; color: #777; }
.scroll span { width: 9px; height: 38px; margin: 2px 0 auto; background: #474747; }
.dlg-buttons { display: flex; flex-direction: column; gap: 6px; width: 91px; padding-top: 6px; }
.pill { width: 91px; height: 20px; border: 1px solid #707070; border-radius: 10px; color: #d8d8d8; }
.pill.primary { border: 2px solid #bdbdbd; }
.pill:disabled { border-color: #3d3d3d; color: #626262; }
.name-row { display: flex; align-items: center; margin-top: 7px; color: #b4b4b4; }
.name-row label { width: 20px; white-space: nowrap; }
.box { height: 17px; border: 1px solid #464646; background: #282828; padding: 0 4px; color: #ddd; }
.name-row .box { width: 186px; margin: 0 auto 0 8px; }
.grad { margin-top: 6px; padding: 0 6px 6px; }
.grad > legend { display: flex; align-items: center; gap: 4px; margin-left: 3px; padding: 0 5px 0 12px; }
.grad > legend .select { height: 17px; }
.smooth { display: flex; align-items: center; gap: 5px; height: 15px; margin: 6px 0 6px 4px; color: #b4b4b4; }
.smooth label { width: 47px; white-space: nowrap; text-align: right; }
.dialog .combo { height: 15px; color: #ddd; }
.ramp { padding: 0 5px 0 4px; }
.stops { position: relative; display: flex; justify-content: space-between; align-items: center; height: 13px; margin: 0 -2px 0 -4px; }
.stops > svg { width: 9px; height: 13px; }
.stops .mid { width: 7px; height: 7px; }
.bar { height: 20px; background: #d6d6d6; }
.points { margin-top: 5px; padding: 0 20px 6px 0; }
.points legend { margin-left: 9px; }
.point-row { display: flex; align-items: center; gap: 5px; height: 18px; margin-top: 5px; color: #b4b4b4; }
.point-row > label { width: 50px; text-align: right; white-space: nowrap; }
.point-row.off { margin-top: 8px; color: #666; gap: 2px; }
.combo.focus { border-color: #2268b8; }
.focus button { border-color: #2268b8; }
.sel { flex: 1; display: flex; align-items: center; }
.combo .sel input { padding: 0; margin: 0 4px 0 2px; background: #1b6fc8; color: #fff; line-height: 11px; height: 11px; }
.right { display: flex; align-items: center; margin-left: auto; }
.right .box { width: 32px; margin: 0 6px 0 5px; }
.pct { width: 9px; }
.flat { width: 59px; height: 19px; margin-left: 10px; border: 1px solid #424242; background: #282828; color: #d8d8d8; }
.flat:disabled { color: #666; }
.chip { width: 34px; height: 18px; border: 1px solid #202020; background: #323232; }
.marks { position: absolute; left: 55px; top: 297px; width: 84px; height: 54px; pointer-events: none; }
.cursor { position: absolute; left: 315px; top: 323px; width: 10px; height: 15px; }
</style>
